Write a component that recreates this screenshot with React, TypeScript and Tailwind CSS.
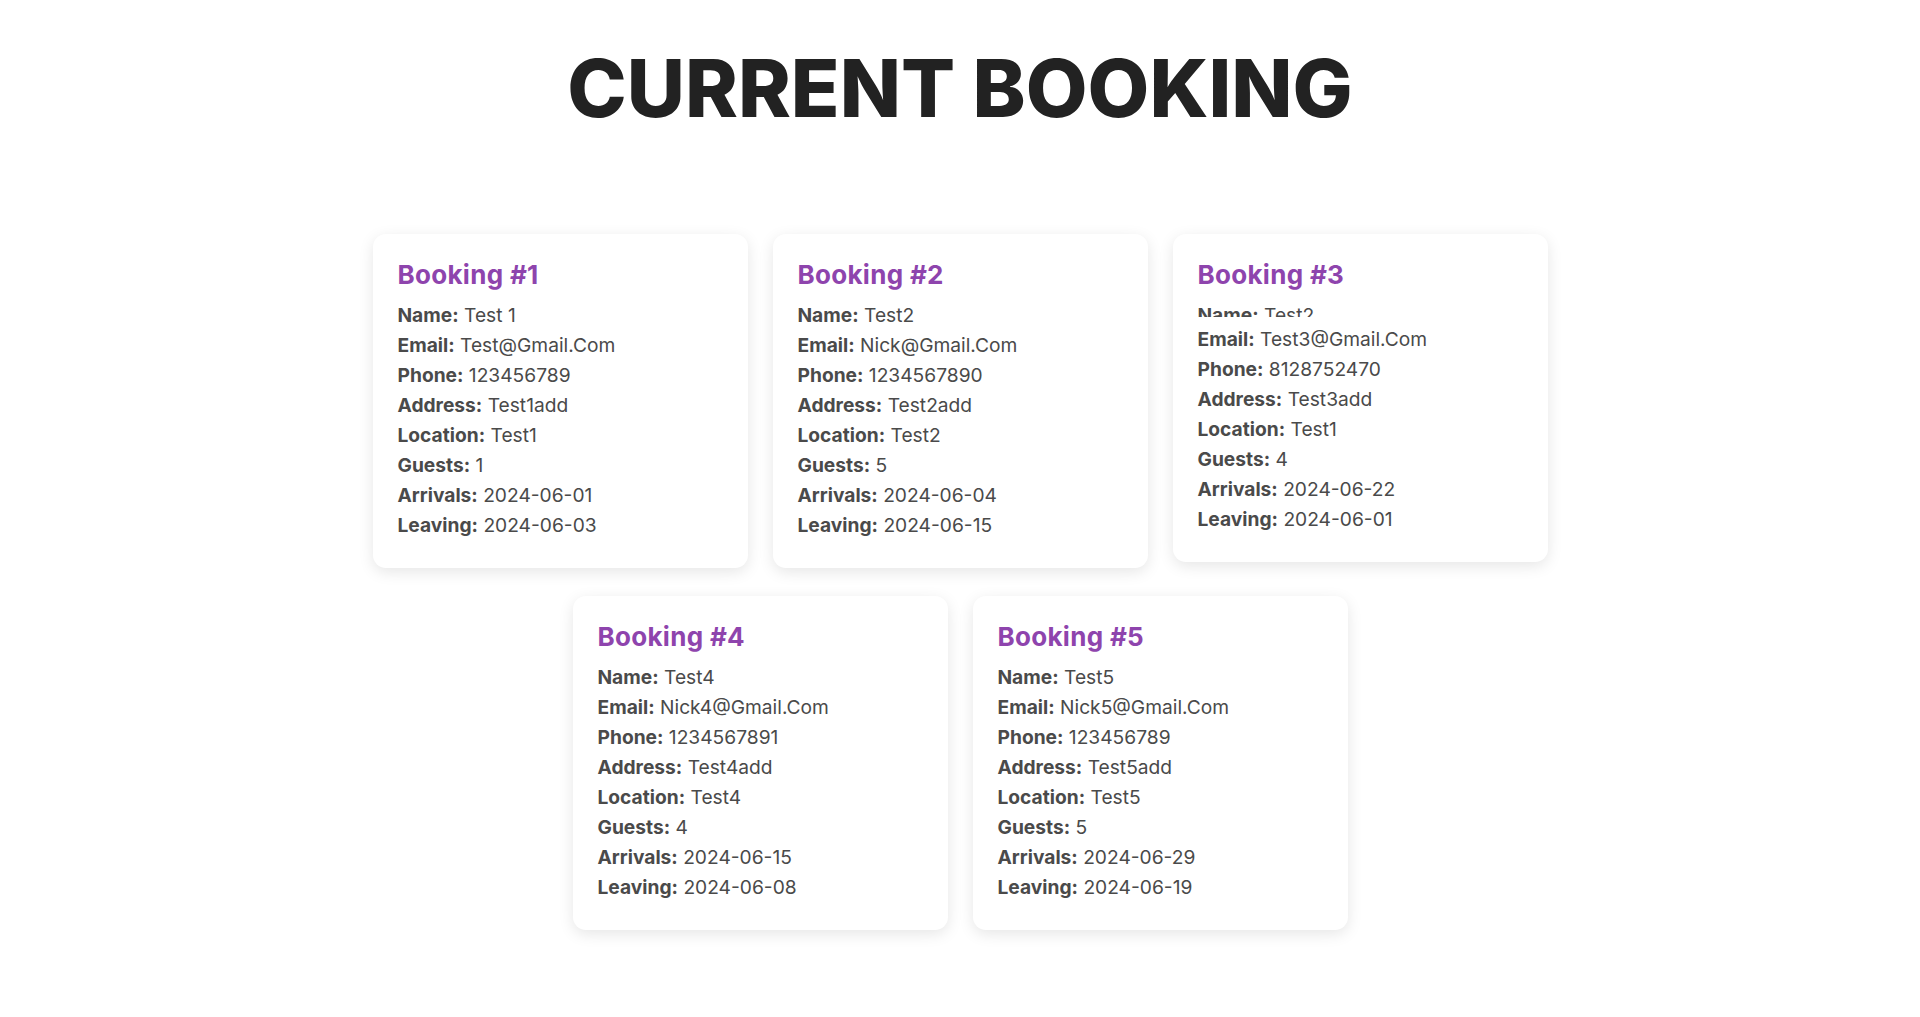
const bookings = [
  { id: 1, name: 'Test 1', email: 'Test@Gmail.Com', phone: '123456789', address: 'Test1add', location: 'Test1', guests: 1, arrivals: '2024-06-01', leaving: '2024-06-03' },
  { id: 2, name: 'Test2', email: 'Nick@Gmail.Com', phone: '1234567890', address: 'Test2add', location: 'Test2', guests: 5, arrivals: '2024-06-04', leaving: '2024-06-15' },
  { id: 3, name: 'Test2', email: 'Test3@Gmail.Com', phone: '8128752470', address: 'Test3add', location: 'Test1', guests: 4, arrivals: '2024-06-22', leaving: '2024-06-01', clipped: true },
  { id: 4, name: 'Test4', email: 'Nick4@Gmail.Com', phone: '1234567891', address: 'Test4add', location: 'Test4', guests: 4, arrivals: '2024-06-15', leaving: '2024-06-08' },
  { id: 5, name: 'Test5', email: 'Nick5@Gmail.Com', phone: '123456789', address: 'Test5add', location: 'Test5', guests: 5, arrivals: '2024-06-29', leaving: '2024-06-19' },
];

function Row({ label, value }: { label: string; value: string | number }) {
  return (
    <p className="h-[30px] leading-[30px] whitespace-nowrap">
      <span className="font-bold">{label}:</span> {value}
    </p>
  );
}

export default function App() {
  return (
    <div className="min-h-screen bg-white flex flex-col items-center font-['Inter',sans-serif]">
      {/* Title */}
      <h1 className="mt-[48px] text-[80px] leading-none font-extrabold text-[#222222]">
        CURRENT BOOKING
      </h1>

      {/* Cards */}
      <div className="mt-[106px] w-[1175px] flex flex-wrap justify-center items-start gap-x-[25px] gap-y-[28px]">
        {bookings.map((b) => (
          <div
            key={b.id}
            className="w-[375px] bg-white rounded-[13px] shadow-[0_4px_15px_rgba(0,0,0,0.1)] px-[25px] pt-[26px] pb-[28px] text-[19.2px] text-[#4a4a4a]"
          >
            <h2 className="text-[26px] leading-[30px] font-bold text-[#8e44ad] tracking-[0.3px] mb-[10px]">Booking #{b.id}</h2>
            {b.clipped ? (
              <div className="h-[24px]">
                <div className="h-[17px] overflow-hidden">
                  <Row label="Name" value={b.name} />
                </div>
              </div>
            ) : (
              <Row label="Name" value={b.name} />
            )}
            <Row label="Email" value={b.email} />
            <Row label="Phone" value={b.phone} />
            <Row label="Address" value={b.address} />
            <Row label="Location" value={b.location} />
            <Row label="Guests" value={b.guests} />
            <Row label="Arrivals" value={b.arrivals} />
            <Row label="Leaving" value={b.leaving} />
          </div>
        ))}
      </div>
    </div>
  );
}
